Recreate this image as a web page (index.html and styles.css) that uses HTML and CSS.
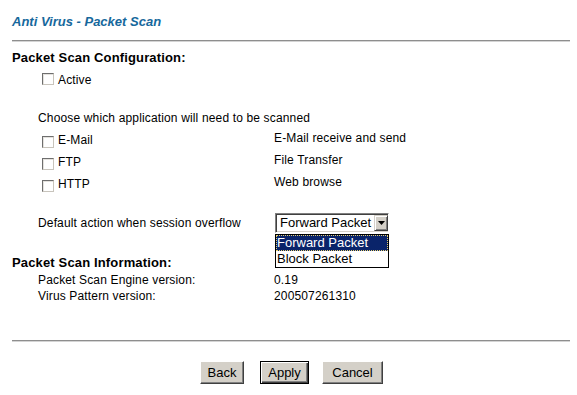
FILE: index.html
```html
<!DOCTYPE html>
<html>
<head>
<meta charset="utf-8">
<title>Anti Virus - Packet Scan</title>
<link rel="stylesheet" href="styles.css">
</head>
<body>
<div class="page">
  <h1 class="title">Anti Virus - Packet Scan</h1>
  <hr class="rule">
  <h2 class="section">Packet Scan Configuration:</h2>
  <div class="solo-row"><label class="check"><input type="checkbox">Active</label></div>
  <p class="note">Choose which application will need to be scanned</p>
  <div class="app-row first"><label class="check"><input type="checkbox">E-Mail</label><span class="desc">E-Mail receive and send</span></div>
  <div class="app-row"><label class="check"><input type="checkbox">FTP</label><span class="desc">File Transfer</span></div>
  <div class="app-row"><label class="check"><input type="checkbox">HTTP</label><span class="desc">Web browse</span></div>
  <div class="action-row">
    <span class="label">Default action when session overflow</span>
    <div class="select">
      <span class="select-text">Forward Packet</span>
      <span class="arrow"><svg width="7" height="4" viewBox="0 0 7 4"><polygon points="0,0 7,0 3.5,4" fill="#000"/></svg></span>
      <ul class="options">
        <li class="option selected">Forward Packet</li>
        <li class="option">Block Packet</li>
      </ul>
    </div>
  </div>
  <h2 class="section info">Packet Scan Information:</h2>
  <div class="info-row first"><span>Packet Scan Engine version:</span><span>0.19</span></div>
  <div class="info-row"><span>Virus Pattern version:</span><span>200507261310</span></div>
  <hr class="rule bottom">
  <div class="buttons">
    <button class="btn back">Back</button>
    <button class="btn apply">Apply</button>
    <button class="btn cancel">Cancel</button>
  </div>
</div>
</body>
</html>
```
FILE: styles.css
```css
* { box-sizing: border-box; }
body {
  margin: 0;
  background: #fff;
  color: #000;
  font-family: "Liberation Sans", Arial, sans-serif;
  font-size: 12px;
  letter-spacing: 0.15px;
}
.page {
  width: 577px;
  padding: 0 7px 0 12px;
}
.title {
  margin: 14px 0 0;
  font-size: 13px;
  line-height: 16px;
  font-weight: bold;
  font-style: italic;
  letter-spacing: 0;
  color: #16689c;
}
.rule {
  margin: 10px 0 0;
  height: 2px;
  border: 0;
  border-top: 1px solid #8e8e8e;
  border-bottom: 1px solid #d4d4d4;
}
.rule.bottom { margin-top: 36px; }
.section {
  margin: 8px 0 0;
  font-size: 13px;
  line-height: 16px;
  font-weight: bold;
}
.section.info { margin-top: 22px; }
.check input {
  appearance: none;
  -webkit-appearance: none;
  display: inline-block;
  width: 12px;
  height: 12px;
  margin: 0 4px 0 0;
  background: #fff;
  border: 1px solid;
  border-color: #6e6e6e #c8c4bc #c8c4bc #6e6e6e;
  box-shadow: inset 1px 1px #e4e2de;
  vertical-align: -4px;
}
.solo-row {
  margin-top: 2px;
  height: 22px;
  padding: 2px 0 0 30px;
  line-height: 20px;
}
.solo-row .check input { vertical-align: -1px; }
.note {
  margin: 19px 0 0;
  padding-left: 26px;
  line-height: 18px;
}
.app-row {
  display: grid;
  grid-template-columns: 236px 1fr;
  height: 22px;
  padding-left: 26px;
}
.app-row.first { margin-top: 1px; }
.app-row .check {
  padding: 2px 0 0 4px;
  line-height: 20px;
}
.app-row .desc { line-height: 20px; }
.action-row {
  display: grid;
  grid-template-columns: 236px 1fr;
  align-items: center;
  height: 20px;
  margin-top: 19px;
  padding-left: 26px;
}
.action-row .label { line-height: 20px; }
.select {
  position: relative;
  display: flex;
  align-items: flex-start;
  width: 114px;
  height: 20px;
  margin-left: 1px;
  background: #fff;
  border: 1px solid;
  border-color: #808080 #fff #fff #808080;
  box-shadow: inset 1px 1px #404040, inset -1px -1px #d4d0c8;
  font-size: 13px;
  letter-spacing: 0;
}
.select-text {
  padding: 1px 0 0 4px;
  line-height: 16px;
}
.arrow {
  display: flex;
  align-items: center;
  justify-content: center;
  width: 14px;
  height: 16px;
  margin: 1px 0 0 auto;
  background: #d4d0c8;
  border: 1px solid;
  border-color: #d4d0c8 #404040 #404040 #d4d0c8;
  box-shadow: inset 1px 1px #fff, inset -1px -1px #808080;
}
.arrow svg { display: block; }
.options {
  position: absolute;
  top: 20px;
  left: -1px;
  width: 114px;
  height: 34px;
  margin: 0;
  padding: 0;
  list-style: none;
  background: #fff;
  border: 1px solid #000;
  z-index: 2;
}
.option {
  height: 16px;
  padding-left: 1px;
  line-height: 16px;
}
.option.selected {
  background: #0a246a;
  color: #fff;
  border: 1px dotted #e8d070;
  padding-left: 0;
  line-height: 14px;
}
.info-row {
  display: grid;
  grid-template-columns: 236px 1fr;
  padding-left: 26px;
  line-height: 16px;
}
.info-row.first { margin-top: 1px; }
.buttons {
  display: flex;
  justify-content: center;
  gap: 13px;
  margin-top: 19px;
  padding-left: 1px;
}
.btn {
  height: 23px;
  padding: 0;
  font-family: "Liberation Sans", Arial, sans-serif;
  font-size: 13px;
  letter-spacing: 0;
  color: #000;
  background: #d4d0c8;
  border: 1px solid;
  border-color: #fff #404040 #404040 #fff;
  box-shadow: inset -1px -1px #808080;
}
.btn.back { width: 44px; margin-right: 3px; }
.btn.apply {
  width: 49px;
  border-color: #000;
  box-shadow: inset 1px 1px #fff, inset -1px -1px #404040, inset -2px -2px #808080;
}
.btn.cancel { width: 61px; }
```
